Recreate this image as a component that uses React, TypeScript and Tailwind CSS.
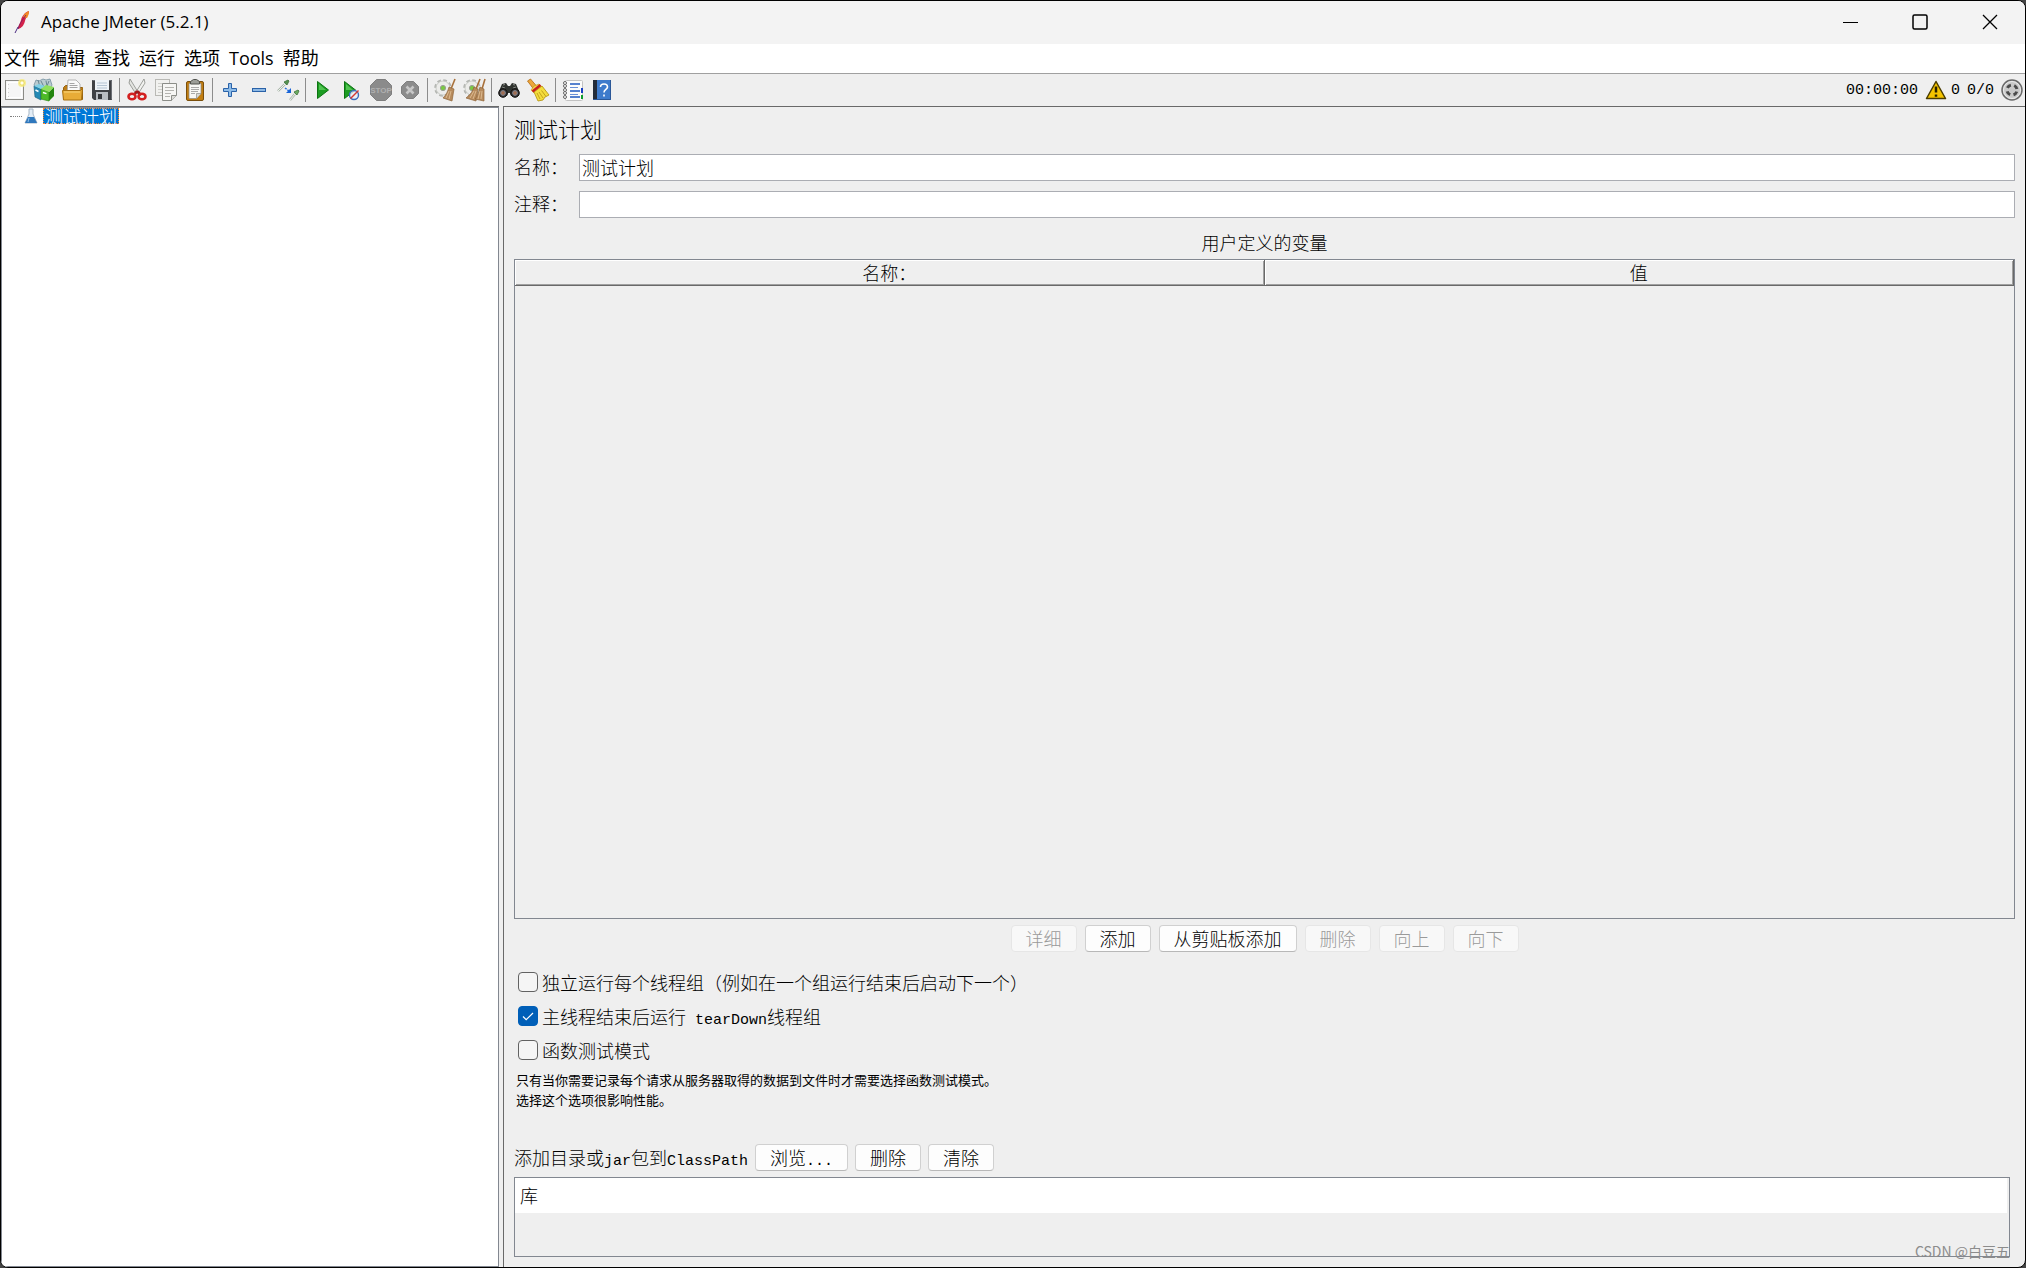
import React, { useState } from 'react';

const MENUS = ['文件', '编辑', '查找', '运行', '选项', 'Tools', '帮助'];

function Icon({ children }: { children: React.ReactNode }) {
  return (
    <svg width="24" height="24" viewBox="0 0 24 24" fill="none" aria-hidden="true" className="shrink-0">
      {children}
    </svg>
  );
}

const NewIcon = () => (
  <Icon>
    <rect x="2.5" y="2.5" width="18" height="19" fill="#f6f6f6" stroke="#8b8b86" />
    <path d="M4.500 4.500h14v15h-14z" stroke="#fff" />
    <path d="M5.500 6v13" stroke="#cfcfcf" strokeDasharray="1 3" />
    <circle cx="19" cy="5" r="4" fill="#f8ec80" opacity=".8" />
    <circle cx="19" cy="5" r="2.2" fill="#fffef0" stroke="#eddc59" />
  </Icon>
);

const TemplatesIcon = () => (
  <Icon>
    <path d="M2 7l2-5 3 1 4-2 3 1 4-1 2 6-3 6H5z" fill="#b9cbd0" stroke="#7391a0" strokeWidth=".8" />
    <path d="M6 2l2 7M9 3l3 6M14 3l1 5M17 3l-2 5" stroke="#5e7d89" strokeWidth=".9" />
    <path d="M2 8l7 3v11l-6-3z" fill="#2489b4" stroke="#1b6583" strokeWidth=".7" />
    <path d="M2 8l5-2 6 2-4 3z" fill="#7fd0e6" />
    <path d="M9 11l8 3v9l-8-2z" fill="#4dba28" stroke="#2d8a14" strokeWidth=".7" />
    <path d="M17 14l5-5v9l-5 5z" fill="#23850f" />
    <path d="M9 11l5-4 8 2-5 5z" fill="#8fe05c" />
    <path d="M3.500 12l3 1.500M11 14.500l3.500 1.200" stroke="#fff" strokeWidth="1.400" />
  </Icon>
);

const OpenIcon = () => (
  <Icon>
    <path d="M2.500 9.500l2-2h4l2 2h11v12h-19z" fill="#bd7d16" stroke="#936010" />
    <path d="M7 2h8l4 4v11H6z" fill="#fafafa" stroke="#a3a3a3" strokeWidth=".8" />
    <path d="M8.500 5.500h5M8.500 7.500h8M8.500 9.500h8" stroke="#a6a6a6" />
    <path d="M1.500 12.500h18l2-2-1 11.500h-18z" fill="#e8ac37" stroke="#a8700f" />
    <path d="M3 14h16" stroke="#f8d57d" />
  </Icon>
);

const SaveIcon = () => (
  <Icon>
    <path d="M2 2h20v20H4l-2-2z" fill="#3f4145" />
    <path d="M2.500 2.500h19v19" stroke="#6b6e74" />
    <rect x="5" y="2" width="14" height="10" fill="#eef3f8" />
    <path d="M7 5h10M7 7.500h10M7 10h10" stroke="#b4c4d3" />
    <rect x="6" y="14" width="12" height="8" fill="#b9bdc2" />
    <rect x="8" y="16" width="4" height="5" fill="#35373b" />
  </Icon>
);

const CutIcon = () => (
  <Icon>
    <path d="M5 1l8 13-2 2L4 5z" fill="#e3e4e1" stroke="#888a85" strokeWidth=".8" />
    <path d="M19 1l-8 13 2 2 7-11z" fill="#f2f2f0" stroke="#888a85" strokeWidth=".8" />
    <path d="M12 13l-3 4M12 13l4 4" stroke="#a51717" strokeWidth="2.500" />
    <ellipse cx="7" cy="18.500" rx="3.500" ry="2.800" stroke="#d32020" strokeWidth="2.600" />
    <ellipse cx="17" cy="18.500" rx="3.500" ry="2.800" stroke="#d32020" strokeWidth="2.600" />
  </Icon>
);

const CopyIcon = () => (
  <Icon>
    <rect x="1.500" y="1.500" width="14" height="16" fill="#f1f1ef" stroke="#b9b9b5" />
    <path d="M4 5.500h9M4 8.500h4M4 11.500h4M4 14.500h4" stroke="#cfcfcb" />
    <path d="M8.500 5.500h14v12l-5 5h-9z" fill="#f6f6f4" stroke="#8b8d88" />
    <path d="M22.500 17.500h-5v5" fill="#dcdcd8" stroke="#8b8d88" />
    <path d="M11 9.500h9M11 12.500h9M11 15.500h6M11 18.500h5" stroke="#b4b4b0" />
  </Icon>
);

const PasteIcon = () => (
  <Icon>
    <rect x="3.500" y="3.500" width="17" height="19" rx="1.500" fill="#c17d11" stroke="#7a4f0c" />
    <path d="M6 5.500h12v10l-4.500 5H6z" fill="#f7f7f5" stroke="#8c8c86" strokeWidth=".7" />
    <path d="M18 15.500h-4.500v5" fill="#d8d8d4" stroke="#8c8c86" strokeWidth=".7" />
    <path d="M8 9.500h8M8 11.500h8M8 13.500h7M8 15.500h4" stroke="#aaa" />
    <path d="M7.500 6V3.500l3-2h3l3 2V6z" fill="#9b9d98" stroke="#50524e" />
  </Icon>
);

const PlusIcon = () => (
  <Icon>
    <path d="M10.500 5.500h3v5h5v3h-5v5h-3v-5h-5v-3h5z" fill="#8cbbe8" stroke="#2a62a8" />
  </Icon>
);

const MinusIcon = () => (
  <Icon>
    <rect x="5.500" y="10.500" width="13" height="3" fill="#8db8e4" stroke="#2a62a8" />
  </Icon>
);

const ToggleIcon = () => (
  <Icon>
    <path d="M2 13l7-7" stroke="#a8b5a8" strokeWidth="2.400" />
    <path d="M2 13l7-7" stroke="#eef3ee" />
    <path d="M8 4l3 3 2-4-1-1z" fill="#55934f" stroke="#3b6e37" strokeWidth=".8" />
    <path d="M14 22l5-6" stroke="#a8b5a8" strokeWidth="2.400" />
    <path d="M14 22l5-6" stroke="#eef3ee" />
    <path d="M18 14l3 3 2-4-1-1z" fill="#6cae62" stroke="#3b6e37" strokeWidth=".8" />
    <path d="M9 10l4 3" stroke="#2b72dd" strokeWidth="1.500" strokeDasharray="2 1" />
    <path d="M15 10v5h-5z" fill="#1763d8" />
  </Icon>
);

const StartIcon = () => (
  <Icon>
    <path d="M6.500 3.500v17l11-8.500z" fill="#1c9c22" stroke="#0c7411" />
    <path d="M8 6v6h7z" fill="#52c452" />
  </Icon>
);

const StartNoTimersIcon = () => (
  <Icon>
    <path d="M4.500 3.500v17l11-8.500z" fill="#1c9c22" stroke="#0c7411" />
    <path d="M6 6v6h7z" fill="#52c452" />
    <circle cx="14" cy="17" r="4.500" fill="#e9eff8" fillOpacity=".8" stroke="#3a6dbd" strokeWidth="1.400" />
    <path d="M10.500 20.500l8-8" stroke="#d33b33" strokeWidth="1.400" />
  </Icon>
);

const StopIcon = () => (
  <Icon>
    <path d="M7.500 1.500h9l6 6v9l-6 6h-9l-6-6v-9z" fill="#8b8b8b" stroke="#7e7e7e" />
    <text x="12" y="15" textAnchor="middle" fontSize="8" className="font-['Liberation_Sans'] font-bold" fill="#b0b0b0">
      STOP
    </text>
  </Icon>
);

const ShutdownIcon = () => (
  <Icon>
    <path d="M8.500 3.500h7l5 5v7l-5 5h-7l-5-5v-7z" fill="#8b8b8b" stroke="#7e7e7e" />
    <path d="M8.500 8.500l7 7M15.500 8.500l-7 7" stroke="#c6c6c6" strokeWidth="2.600" />
  </Icon>
);

function Gear() {
  return (
    <>
      <circle cx="10" cy="10" r="7" stroke="#b4b6b2" strokeWidth="3.600" strokeDasharray="3.400 2.098" />
      <circle cx="10" cy="10" r="7" fill="#ececea" stroke="#c4c6c2" strokeWidth=".8" />
      <circle cx="10" cy="10" r="2.600" fill="#7ac943" stroke="#9a9c97" />
    </>
  );
}

const ClearIcon = () => (
  <Icon>
    <Gear />
    <path d="M22 1l-4 10" stroke="#a8703a" strokeWidth="1.600" />
    <path d="M16 9l5 2-2 12-9-3c3-3 5-7 6-11z" fill="#b78b5d" stroke="#8f6539" strokeWidth=".7" />
    <path d="M16 13l-3 7M18 13l-2 8" stroke="#dcb98e" />
  </Icon>
);

const ClearAllIcon = () => (
  <Icon>
    <Gear />
    <path d="M18 1l-4 10M23 1l-3 10" stroke="#a8703a" strokeWidth="1.600" />
    <path d="M12 9l4 2-2 12-10-3c4-3 7-7 8-11z" fill="#b78b5d" stroke="#8f6539" strokeWidth=".7" />
    <path d="M18 9l4 2v12l-9-2c3-3 4-8 5-12z" fill="#b78b5d" stroke="#8f6539" strokeWidth=".7" />
    <path d="M12 13l-4 7M14 13l-3 8M18 13l-2 8M20 13l-1 8" stroke="#dcb98e" />
  </Icon>
);

const SearchIcon = () => (
  <Icon>
    <path d="M5 6l4-1 2 3h2l2-3 4 1 3 7v5h-8l-1-3h-2l-1 3H2v-5z" fill="#30332f" />
    <path d="M6 7l2-.500M16 6.500l2 .500M5 9l3 1M19 9l-3 1" stroke="#858882" />
    <circle cx="6" cy="15" r="4.300" fill="#2e2a28" stroke="#151515" />
    <circle cx="18" cy="15" r="4.300" fill="#2e2a28" stroke="#151515" />
    <circle cx="6" cy="15" r="2.400" fill="#a06d52" stroke="#798392" />
    <circle cx="18" cy="15" r="2.400" fill="#a06d52" stroke="#798392" />
  </Icon>
);

const SearchResetIcon = () => (
  <Icon>
    <path d="M1.500 3l3-2 6 7-3 3z" fill="#eda63b" stroke="#b26b12" strokeWidth=".8" />
    <path d="M5 12l3-4 5-2 3 3-8 6z" fill="#f5d14a" stroke="#b99817" strokeWidth=".6" />
    <path d="M8 14l8-6 7 9-4 2-2 3-5 1z" fill="#f4dd3d" stroke="#b99817" strokeWidth=".9" />
    <path d="M6.500 13.500l8-6.500" stroke="#c81e1e" strokeWidth="2.400" />
    <path d="M11 15l3 6M13 14l4 6M15.500 12.500l4.500 6" stroke="#c4a31c" />
  </Icon>
);

const FunctionIcon = () => (
  <Icon>
    <rect x="4.500" y="2.500" width="17" height="20" rx="1" fill="#fbfbfb" stroke="#c2c2c2" />
    <path d="M20 10h2v5h-2z" fill="#183fc4" />
    <path d="M20 17h2v4h-2z" fill="#0c9d2c" />
    <path d="M9 6h10M9 13h10M9 19h10" stroke="#2159c0" strokeWidth="1.400" />
    <path d="M9 9.500h8M9 16.500h8" stroke="#6a90d6" />
    {[5, 8, 12, 15, 19].map((y) => (
      <circle key={y} cx="4" cy={y} r="1.500" fill="#fff" stroke="#666" />
    ))}
  </Icon>
);

const HelpIcon = () => (
  <Icon>
    <path d="M3 2h18v20H3z" fill="#3e7bcc" />
    <path d="M3 2h4v20H3z" fill="#232c3a" />
    <path d="M3 21.500h17.500V2" stroke="#2b5797" />
    <path d="M10.500 9c0-4 7-4 7 0 0 2.500-3.500 2.500-3.500 5.500M14 16.500v2" stroke="#fff" strokeWidth="1.600" />
  </Icon>
);

type Tool = { label: string; icon: () => React.ReactElement; disabled?: boolean };

const TOOLS: Tool[][] = [
  [
    { label: '新建', icon: NewIcon },
    { label: '模板', icon: TemplatesIcon },
    { label: '打开', icon: OpenIcon },
    { label: '保存', icon: SaveIcon },
  ],
  [
    { label: '剪切', icon: CutIcon },
    { label: '复制', icon: CopyIcon },
    { label: '粘贴', icon: PasteIcon },
  ],
  [
    { label: '展开', icon: PlusIcon },
    { label: '折叠', icon: MinusIcon },
    { label: '切换', icon: ToggleIcon },
  ],
  [
    { label: '启动', icon: StartIcon },
    { label: '无间隔启动', icon: StartNoTimersIcon },
    { label: '停止', icon: StopIcon, disabled: true },
    { label: '关闭', icon: ShutdownIcon, disabled: true },
  ],
  [
    { label: '清除', icon: ClearIcon },
    { label: '清除全部', icon: ClearAllIcon },
  ],
  [
    { label: '搜索', icon: SearchIcon },
    { label: '重置搜索', icon: SearchResetIcon },
  ],
  [
    { label: '函数助手', icon: FunctionIcon },
    { label: '帮助', icon: HelpIcon },
  ],
];

function TitleBar() {
  return (
    <header className="flex h-[43px] items-center bg-[#f3f3f3] pb-0.5 pl-3">
      <svg width="18" height="24" viewBox="0 0 18 24" aria-hidden="true">
        <path d="M16 1c-4 1-7 5-8 9s-3 6-3 9c4-1 6-4 7-8s4-6 4-10z" fill="#d3224a" />
        <path d="M16 1c-3 1-5 3-6 6l4 1c1-2 2-4 2-7z" fill="#f08a24" />
        <path d="M5 19c1-4 4-9 8-14" stroke="#8c1d5e" fill="none" />
        <path d="M5 17l-3 6" stroke="#4a2a80" fill="none" />
      </svg>
      <h1 className="ml-[10px] flex-1 text-[17px] font-normal">Apache JMeter (5.2.1)</h1>
      <div className="flex">
        <button aria-label="最小化" className="flex h-10 w-[70px] items-center justify-center">
          <svg width="16" height="16" viewBox="0 0 16 16" fill="none" stroke="#000">
            <path d="M1 8.500h15" />
          </svg>
        </button>
        <button aria-label="最大化" className="flex h-10 w-[70px] items-center justify-center">
          <svg width="16" height="16" viewBox="0 0 16 16" fill="none" stroke="#000" strokeWidth="1.500">
            <rect x="1" y="1" width="14" height="14" rx="1.500" />
          </svg>
        </button>
        <button aria-label="关闭" className="flex h-10 w-[70px] items-center justify-center">
          <svg width="16" height="16" viewBox="0 0 16 16" fill="none" stroke="#000" strokeWidth="1.300">
            <path d="M1 1l14 14M15 1L1 15" />
          </svg>
        </button>
      </div>
    </header>
  );
}

function Toolbar() {
  return (
    <div className="flex h-[33px] items-center justify-between border-t border-[#a0a0a0]">
      <div className="-ml-px flex h-[30px] items-center">
        {TOOLS.map((group, i) => (
          <React.Fragment key={i}>
            {i > 0 && <div className="mr-0.5 ml-[3px] h-6 w-px bg-[#8c8c8c]" />}
            {group.map(({ label, icon: ToolIcon, disabled }) => (
              <button
                key={label}
                title={label}
                aria-label={label}
                disabled={disabled}
                className="flex h-[30px] w-[29px] items-center justify-center"
              >
                <ToolIcon />
              </button>
            ))}
          </React.Fragment>
        ))}
      </div>
      <div className="flex items-center gap-[7px] pr-0.5 font-['Liberation_Mono',monospace] text-[15px] leading-[22px]">
        <span className="pt-0.5">00:00:00</span>
        <button className="flex items-center gap-1" aria-label="错误日志">
          <svg width="22" height="20" viewBox="0 0 22 20" aria-hidden="true">
            <path d="M11 1.500L20.500 18.500h-19z" fill="#f5c400" stroke="#4b3d00" strokeWidth="1.500" strokeLinejoin="round" />
            <path d="M11 6.500v6M11 14.500v2.300" stroke="#2a2200" strokeWidth="2.500" />
          </svg>
          <span className="pt-0.5">0</span>
        </button>
        <span className="pt-0.5">0/0</span>
        <svg width="22" height="22" viewBox="0 0 22 22" fill="none" aria-hidden="true">
          <circle cx="11" cy="11" r="10" fill="#c9c9c9" stroke="#6a6a6a" strokeWidth="1.500" />
          <circle cx="11" cy="11" r="8.500" stroke="#ececec" />
          <circle
            cx="11"
            cy="11"
            r="5"
            stroke="#4b4b4b"
            strokeWidth="3"
            strokeDasharray="4.400 3.454"
            strokeDashoffset="-1.700"
          />
        </svg>
      </div>
    </div>
  );
}

function TestTree() {
  return (
    <aside className="w-[498px] shrink-0 border-t border-[#696969]">
      <div className="h-full border border-[#828790] bg-white">
        <ul>
          <li className="flex h-4 items-center pl-2">
            <span className="w-3 border-t border-dotted border-[#808080]" />
            <svg width="14" height="16" viewBox="0 0 14 16" className="ml-0.5" aria-hidden="true">
              <path d="M5 1h4v5l4 9H1l4-9z" fill="#e3edf6" stroke="#a9b8c6" />
              <path d="M4 9h6l3 6H1z" fill="#2f78bd" />
              <path d="M5 10l-1 4" stroke="#8fc0ea" />
            </svg>
            <button className="ml-[5px] h-4 border border-dotted border-[#ff8728] bg-[#0078d7] px-px text-[18px] leading-[14px] font-light text-white">
              测试计划
            </button>
          </li>
        </ul>
      </div>
    </aside>
  );
}

function PushButton({ children, disabled }: { children: React.ReactNode; disabled?: boolean }) {
  return (
    <button
      disabled={disabled}
      className="h-[27px] rounded-[4px] border border-[#d0d0d0] border-b-[#b8b8b8] bg-[#fdfdfd] px-[14px] text-[18px] leading-[25px] whitespace-nowrap disabled:border-[#e6e6e6] disabled:bg-[#f8f8f8] disabled:text-[#9a9a9a]"
    >
      {children}
    </button>
  );
}

function CheckRow({ children, initial = false }: { children: React.ReactNode; initial?: boolean }) {
  const [checked, setChecked] = useState(initial);

  return (
    <label className="flex h-[34px] items-center gap-1 pl-1 text-[18px]">
      <span className="relative flex size-5">
        <input
          type="checkbox"
          checked={checked}
          onChange={(e) => setChecked(e.target.checked)}
          className="size-5 appearance-none rounded-[4px] border border-[#626262] bg-[#f5f5f5] checked:border-[#005fb8] checked:bg-[#005fb8]"
        />
        {checked && (
          <svg viewBox="0 0 20 20" fill="none" className="pointer-events-none absolute inset-0">
            <path d="M5 10.500l3.200 3.200L15 7" stroke="#fff" strokeWidth="1.200" />
          </svg>
        )}
      </span>
      <span>{children}</span>
    </label>
  );
}

// Half-width runs are set in a monospaced face, half as wide as the CJK glyphs
function Latin({ children }: { children: React.ReactNode }) {
  return (
    <span className="font-['Liberation_Mono',monospace] text-[15px] leading-none font-normal whitespace-pre">
      {children}
    </span>
  );
}

const TH = 'h-[26px] border-r border-b border-[#696969] p-0 pb-0.5 text-[18px] leading-[20px] font-light shadow-[inset_1px_1px_0_#fff,inset_-1px_-1px_0_#a0a0a0]';

function TestPlanPanel() {
  const [name, setName] = useState('测试计划');
  const [comment, setComment] = useState('');

  return (
    <main className="flex min-w-0 flex-1 flex-col border-t border-l border-[#696969] px-[10px] pt-2 pb-[10px] font-light">
      <h2 className="text-[22px] leading-[27px]">测试计划</h2>

      <div className="mt-3 flex items-start">
        <label htmlFor="name" className="w-[65px] text-[18px] leading-[25px]">
          名称：
        </label>
        <input
          id="name"
          value={name}
          onChange={(e) => setName(e.target.value)}
          className="h-[27px] min-w-0 flex-1 border border-[#abadb3] bg-white px-0.5 pb-px text-[18px] leading-[24px] outline-none"
        />
      </div>
      <div className="mt-[10px] flex items-start">
        <label htmlFor="comment" className="w-[65px] text-[18px] leading-[24px]">
          注释：
        </label>
        <input
          id="comment"
          value={comment}
          onChange={(e) => setComment(e.target.value)}
          className="h-[27px] min-w-0 flex-1 border border-[#abadb3] bg-white px-0.5 pb-px text-[18px] leading-[24px] outline-none"
        />
      </div>

      <h3 className="mt-2 text-center text-[18px] leading-[33px] font-light">用户定义的变量</h3>
      <div className="min-h-40 flex-1 border border-[#828790]">
        <table className="w-full table-fixed border-separate border-spacing-0">
          <thead>
            <tr>
              <th className={TH}>名称：</th>
              <th className={TH}>值</th>
            </tr>
          </thead>
        </table>
      </div>
      <div className="mt-[6px] flex justify-center gap-2">
        <PushButton disabled>详细</PushButton>
        <PushButton>添加</PushButton>
        <PushButton>从剪贴板添加</PushButton>
        <PushButton disabled>删除</PushButton>
        <PushButton disabled>向上</PushButton>
        <PushButton disabled>向下</PushButton>
      </div>

      <div className="mt-[13px]">
        <CheckRow>独立运行每个线程组（例如在一个组运行结束后启动下一个）</CheckRow>
        <CheckRow initial>
          主线程结束后运行<Latin> tearDown</Latin>线程组
        </CheckRow>
        <CheckRow>函数测试模式</CheckRow>
      </div>
      <p className="mt-[3px] pl-0.5 text-[13px] leading-5 font-normal">
        只有当你需要记录每个请求从服务器取得的数据到文件时才需要选择函数测试模式。
        <br />
        选择这个选项很影响性能。
      </p>

      <div className="mt-[34px] flex h-[27px] items-center gap-[7px]">
        <span className="text-[18px] leading-[27px]">
          添加目录或<Latin>jar</Latin>包到<Latin>ClassPath</Latin>
        </span>
        <PushButton>
          浏览<Latin>...</Latin>
        </PushButton>
        <PushButton>删除</PushButton>
        <PushButton>清除</PushButton>
      </div>
      <div className="relative mt-[6px] mr-[5px] h-20 border border-[#828790]">
        <table className="w-full">
          <thead>
            <tr>
              <th className="h-[35px] border-r-2 border-[#efefef] bg-white p-0 pl-[5px] text-left text-[18px] font-light">库</th>
            </tr>
          </thead>
        </table>
        <span className="absolute -right-px -bottom-[5px] text-[14px] leading-5 font-normal whitespace-nowrap text-[#8c8c8c]">
          CSDN @白豆五
        </span>
      </div>
    </main>
  );
}

export default function App() {
  return (
    <div className="flex min-h-screen bg-[#444]">
      <div className="flex min-w-0 flex-1 flex-col overflow-hidden rounded-[8px] border border-black bg-[#efefef] font-['Open_Sans','Noto_Sans_CJK_SC',sans-serif] text-black">
        <TitleBar />
        <nav className="flex h-[29px] items-center gap-[9px] bg-white pl-[3px] text-[18px]">
          {MENUS.map((menu) => (
            <button key={menu}>{menu}</button>
          ))}
        </nav>
        <Toolbar />
        <div className="flex flex-1 gap-1 font-['Noto_Sans_CJK_SC',sans-serif]">
          <TestTree />
          <TestPlanPanel />
        </div>
      </div>
    </div>
  );
}
